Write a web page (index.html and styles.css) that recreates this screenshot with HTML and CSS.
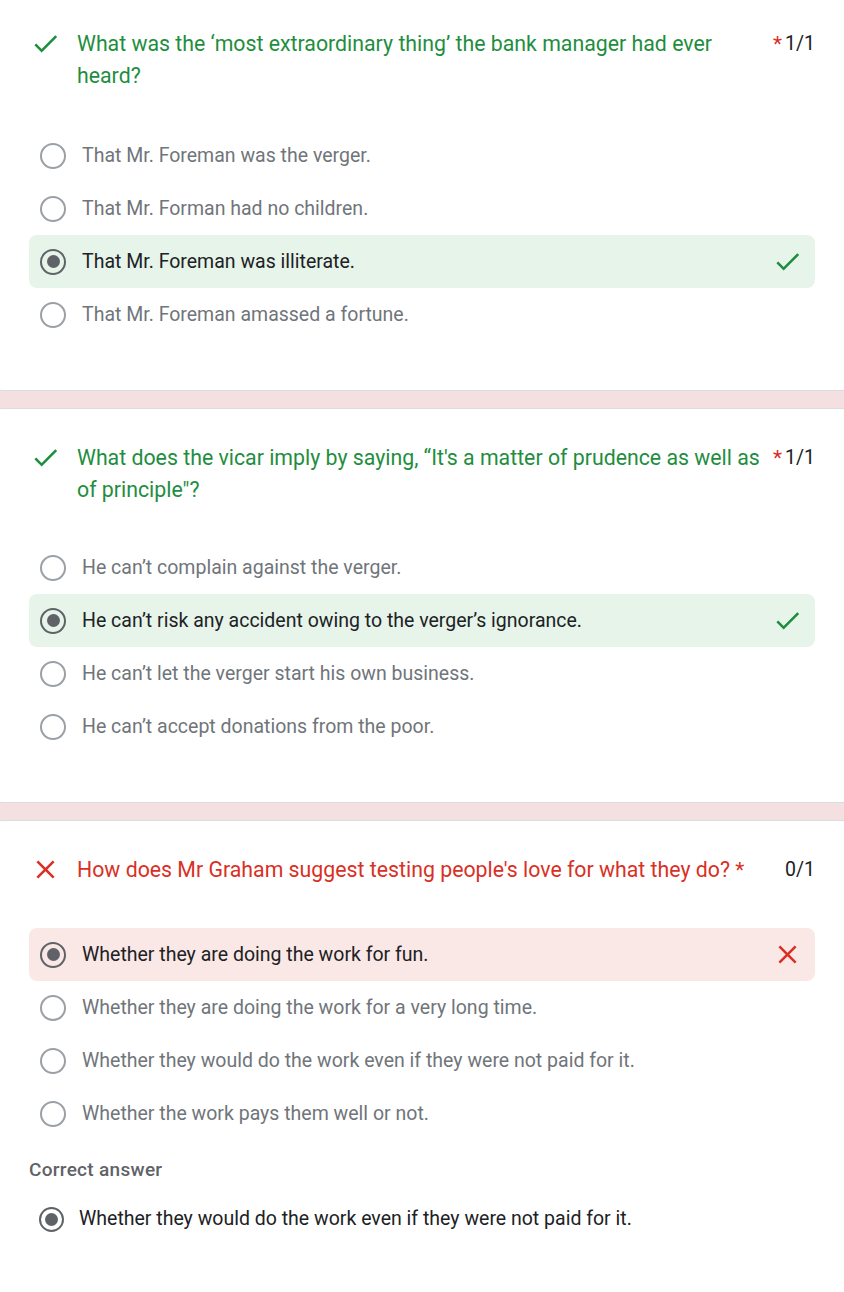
FILE: index.html
```html
<!DOCTYPE html>
<html lang="en">
<head>
<meta charset="utf-8">
<title>Quiz results</title>
<link rel="stylesheet" href="styles.css">
</head>
<body>
<div class="page">

  <section class="card card-first">
    <div class="q-head">
      <svg class="q-icon ok" viewBox="0 0 24 24"><path d="M9 16.17L4.83 12l-1.42 1.41L9 19 21 7l-1.41-1.41z"/></svg>
      <div class="q-title ok-text">What was the ‘most extraordinary thing’ the bank manager had ever heard?</div>
      <span class="req">*</span>
      <span class="score">1/1</span>
    </div>
    <div class="options options-first">
      <div class="opt"><span class="radio"></span><span class="opt-text">That Mr. Foreman was the verger.</span></div>
      <div class="opt"><span class="radio"></span><span class="opt-text">That Mr. Forman had no children.</span></div>
      <div class="opt opt-correct"><span class="radio checked"></span><span class="opt-text">That Mr. Foreman was illiterate.</span>
        <svg class="opt-icon ok" viewBox="0 0 24 24"><path d="M9 16.17L4.83 12l-1.42 1.41L9 19 21 7l-1.41-1.41z"/></svg></div>
      <div class="opt"><span class="radio"></span><span class="opt-text">That Mr. Foreman amassed a fortune.</span></div>
    </div>
  </section>

  <section class="card">
    <div class="q-head">
      <svg class="q-icon ok" viewBox="0 0 24 24"><path d="M9 16.17L4.83 12l-1.42 1.41L9 19 21 7l-1.41-1.41z"/></svg>
      <div class="q-title ok-text">What does the vicar imply by saying, “It's a matter of prudence as well as of principle"?</div>
      <span class="req">*</span>
      <span class="score">1/1</span>
    </div>
    <div class="options">
      <div class="opt"><span class="radio"></span><span class="opt-text">He can’t complain against the verger.</span></div>
      <div class="opt opt-correct"><span class="radio checked"></span><span class="opt-text">He can’t risk any accident owing to the verger’s ignorance.</span>
        <svg class="opt-icon ok" viewBox="0 0 24 24"><path d="M9 16.17L4.83 12l-1.42 1.41L9 19 21 7l-1.41-1.41z"/></svg></div>
      <div class="opt"><span class="radio"></span><span class="opt-text">He can’t let the verger start his own business.</span></div>
      <div class="opt"><span class="radio"></span><span class="opt-text">He can’t accept donations from the poor.</span></div>
    </div>
  </section>

  <section class="card card-last">
    <div class="q-head">
      <svg class="q-icon bad" viewBox="0 0 24 24"><path d="M19 6.41L17.59 5 12 10.59 6.41 5 5 6.41 10.59 12 5 17.59 6.41 19 12 13.41 17.59 19 19 17.59 13.41 12z"/></svg>
      <div class="q-title bad-text">How does Mr Graham suggest testing people's love for what they do? <span class="req-inline">*</span></div>
      <span class="score">0/1</span>
    </div>
    <div class="options options-wide">
      <div class="opt opt-wrong"><span class="radio checked"></span><span class="opt-text">Whether they are doing the work for fun.</span>
        <svg class="opt-icon bad" viewBox="0 0 24 24"><path d="M19 6.41L17.59 5 12 10.59 6.41 5 5 6.41 10.59 12 5 17.59 6.41 19 12 13.41 17.59 19 19 17.59 13.41 12z"/></svg></div>
      <div class="opt"><span class="radio"></span><span class="opt-text">Whether they are doing the work for a very long time.</span></div>
      <div class="opt"><span class="radio"></span><span class="opt-text">Whether they would do the work even if they were not paid for it.</span></div>
      <div class="opt"><span class="radio"></span><span class="opt-text">Whether the work pays them well or not.</span></div>
    </div>
    <div class="answer-label">Correct answer</div>
    <div class="answer"><span class="radio checked"></span><span class="answer-text">Whether they would do the work even if they were not paid for it.</span></div>
  </section>

</div>
</body>
</html>
```

FILE: styles.css
```css
* { box-sizing: border-box; }

html, body {
  margin: 0;
  padding: 0;
  background: #f4dfe1;
  font-family: Roboto, "Liberation Sans", Arial, sans-serif;
  overflow: hidden;
}

.page {
  display: flex;
  flex-direction: column;
  gap: 17px;
}

.card {
  background: #ffffff;
  border: 1px solid #dadce0;
  border-radius: 8px;
  margin: 0 -6px;
  padding: 33px 34px 49px;
}

.card-first {
  margin-top: -6px;
}

.card-last {
  min-height: 480px;
}

.q-head {
  display: flex;
  align-items: flex-start;
}

.q-icon {
  flex: 0 0 auto;
  width: 31px;
  height: 31px;
  margin-left: 1px;
  margin-right: 16px;
}

.ok { fill: #1e8e3e; }
.bad { fill: #d93025; }

.q-title {
  flex: 0 1 auto;
  font-size: 21.3px;
  line-height: 32px;
}

.ok-text { color: #1e8e3e; }
.bad-text { color: #d93025; }

.req, .req-inline {
  color: #d93025;
  font-size: 21px;
  line-height: 32px;
}

.req {
  flex: 0 0 auto;
  margin-left: 4px;
}

.score {
  flex: 0 0 auto;
  margin-left: auto;
  padding-left: 3px;
  font-size: 19.5px;
  line-height: 32px;
  color: #202124;
}

.options {
  margin-top: 35px;
  display: flex;
  flex-direction: column;
}

.options-first {
  margin-top: 37px;
}

.options-wide {
  margin-top: 42px;
}

.opt {
  display: flex;
  align-items: center;
  height: 53px;
  padding: 0 12px 0 11px;
  border-radius: 8px;
}

.opt-correct { background: #e6f4ea; }
.opt-wrong { background: #fae8e6; }

.radio {
  flex: 0 0 auto;
  width: 26px;
  height: 26px;
  border-radius: 50%;
  border: 2.5px solid #9aa0a6;
  display: flex;
  align-items: center;
  justify-content: center;
}

.radio.checked {
  border-color: #5f6368;
}

.radio.checked::after {
  content: "";
  width: 13px;
  height: 13px;
  border-radius: 50%;
  background: #5f6368;
}

.opt-text {
  margin-left: 16px;
  font-size: 19.5px;
  line-height: 24px;
  color: #70757a;
  flex: 1 1 auto;
}

.opt-correct .opt-text,
.opt-wrong .opt-text {
  color: #202124;
}

.opt-icon {
  flex: 0 0 auto;
  width: 31px;
  height: 31px;
}

.answer-label {
  margin-top: 18px;
  font-size: 19px;
  line-height: 24px;
  font-weight: 500;
  letter-spacing: 0.3px;
  color: #5f6368;
}

.answer {
  display: flex;
  align-items: center;
  height: 48px;
  margin-top: 13px;
  padding-left: 10px;
}

.answer .radio {
  width: 25px;
  height: 25px;
}

.answer-text {
  margin-left: 15px;
  font-size: 19.5px;
  line-height: 24px;
  color: #202124;
}
```
